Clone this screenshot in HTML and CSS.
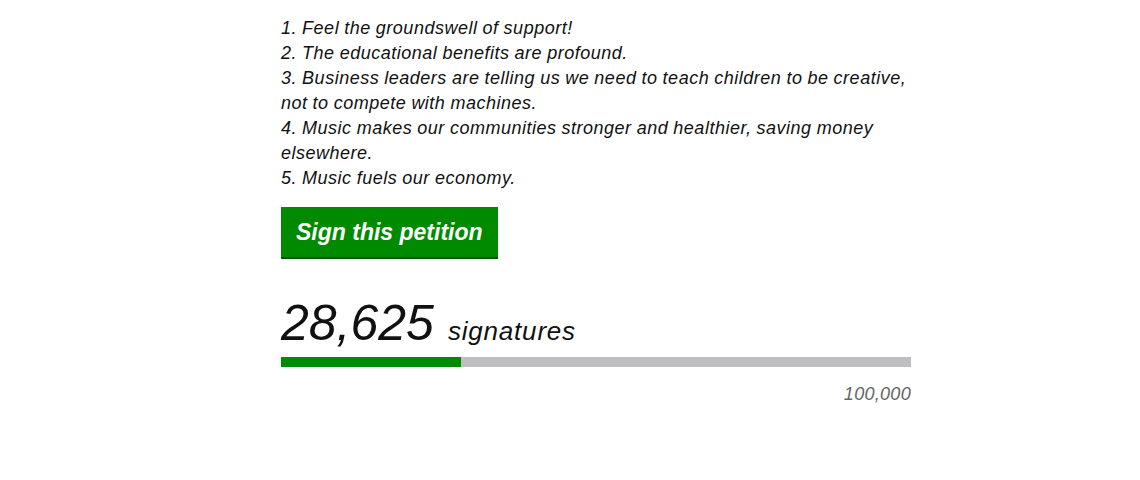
FILE: index.html
```html
<!DOCTYPE html>
<html lang="en">

<head>
    <meta charset="UTF-8">
    <meta name="viewport" content="width=device-width, initial-scale=1.0">
    <title>Petition</title>
    <link rel="stylesheet" href="styles.css">
</head>

<body>
    <div class="petition">
        <!-- Reasons list -->
        <p class="reasons">
            1. Feel the groundswell of support!<br>
            2. The educational benefits are profound.<br>
            3. Business leaders are telling us we need to teach children to be creative, not to compete with machines.<br>
            4. Music makes our communities stronger and healthier, saving money elsewhere.<br>
            5. Music fuels our economy.
        </p>

        <a class="sign-button" href="#">Sign this petition</a>

        <!-- Signature progress -->
        <div class="signature-count">
            <span class="count">28,625</span>
            <span class="label">signatures</span>
        </div>
        <div class="progress">
            <div class="progress-fill" style="width: 28.625%"></div>
        </div>
        <div class="goal">100,000</div>
    </div>
</body>

</html>
```
FILE: styles.css
```css
body {
    margin: 0;
    font-family: "Liberation Sans", Arial, sans-serif;
    font-style: italic;
    color: #111;
    background-color: #fff;
}

.petition {
    width: 630px;
    margin-left: 281px;
    padding-top: 16px;
}

.reasons {
    margin: 0;
    font-size: 18px;
    line-height: 25px;
    letter-spacing: 0.5px;
    word-spacing: -0.4px;
}

.sign-button {
    display: inline-block;
    margin-top: 16px;
    padding: 11px 15px 10px;
    background-color: #008a00;
    border-bottom: 2px solid #005800;
    color: #fff;
    font-size: 23px;
    font-weight: bold;
    line-height: 29px;
    text-decoration: none;
}

.signature-count {
    margin-top: 36px;
    display: flex;
    align-items: baseline;
    gap: 14px;
}

.count {
    font-size: 50px;
    line-height: 56px;
}

.label {
    font-size: 26px;
    letter-spacing: 0.8px;
}

.progress {
    margin-top: 6px;
    height: 10px;
    background-color: #bfbfc1;
}

.progress-fill {
    height: 100%;
    background-color: #008a00;
}

.goal {
    margin-top: 17px;
    text-align: right;
    font-size: 18px;
    letter-spacing: 0.3px;
    color: #666;
}
```
